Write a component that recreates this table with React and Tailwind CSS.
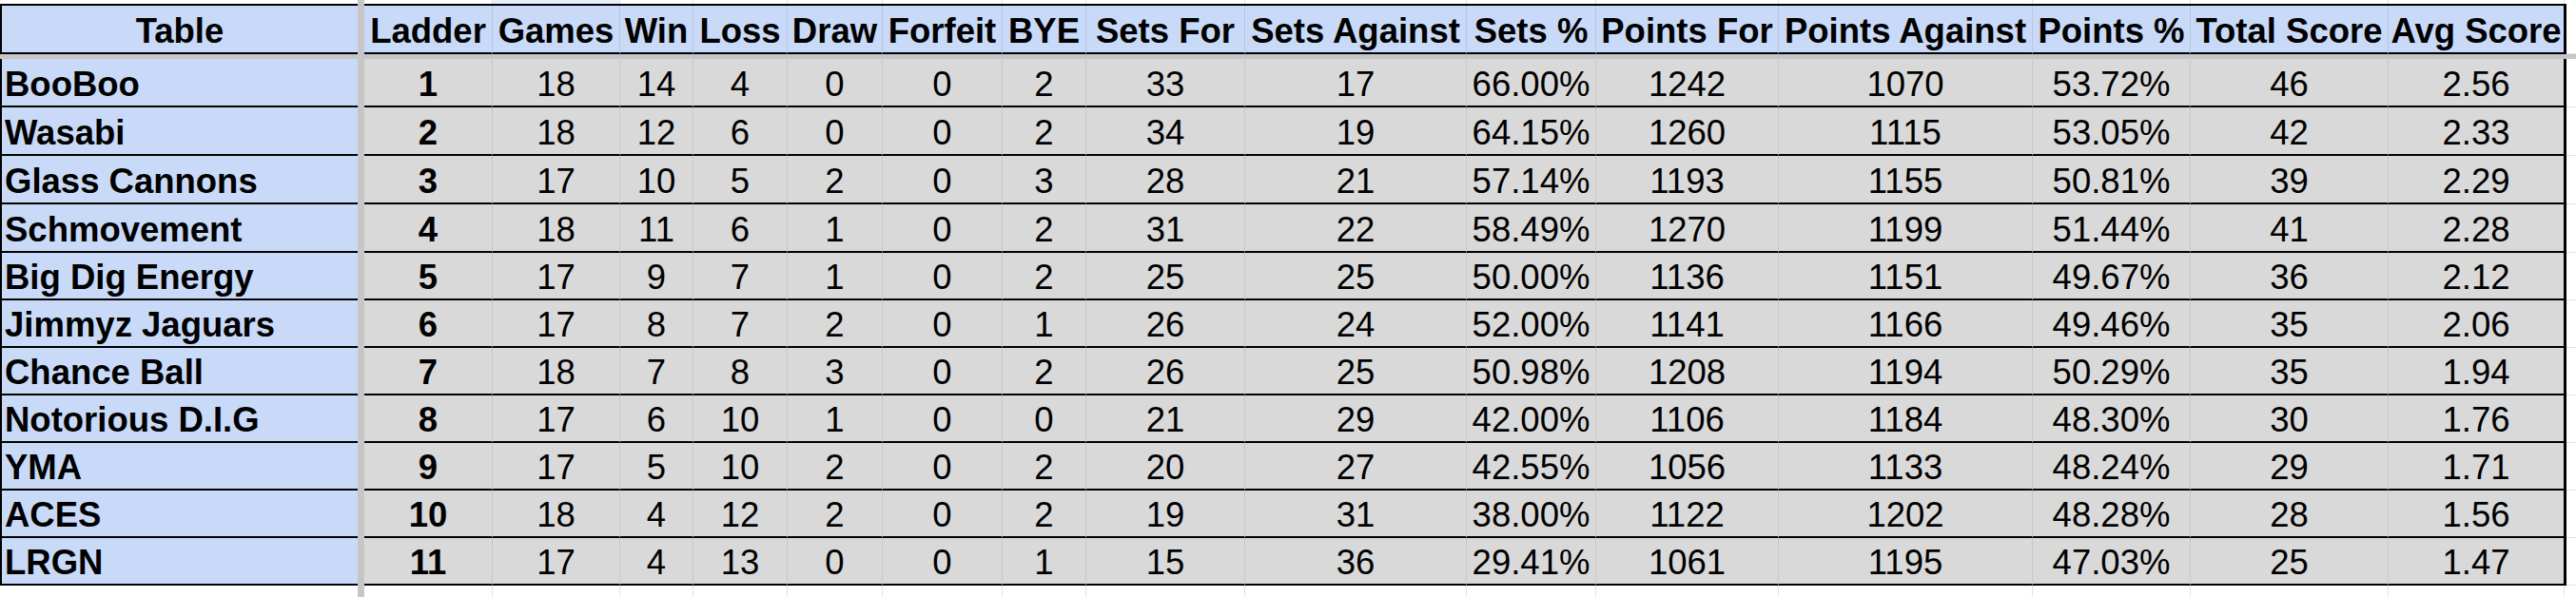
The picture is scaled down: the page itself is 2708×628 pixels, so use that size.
import React from 'react';

const columns = [
  { label: 'Ladder', w: 'w-[134px]' },
  { label: 'Games', w: 'w-[134px]' },
  { label: 'Win', w: 'w-[77px]' },
  { label: 'Loss', w: 'w-[99px]' },
  { label: 'Draw', w: 'w-[100px]' },
  { label: 'Forfeit', w: 'w-[126px]' },
  { label: 'BYE', w: 'w-[88px]' },
  { label: 'Sets For', w: 'w-[167px]' },
  { label: 'Sets Against', w: 'w-[233px]' },
  { label: 'Sets %', w: 'w-[136px]' },
  { label: 'Points For', w: 'w-[192px]' },
  { label: 'Points Against', w: 'w-[267px]' },
  { label: 'Points %', w: 'w-[166px]' },
  { label: 'Total Score', w: 'w-[208px]' },
  { label: 'Avg Score', w: 'w-[185px]' },
];

const teams = [
  ['BooBoo', 1, 18, 14, 4, 0, 0, 2, 33, 17, '66.00%', 1242, 1070, '53.72%', 46, '2.56'],
  ['Wasabi', 2, 18, 12, 6, 0, 0, 2, 34, 19, '64.15%', 1260, 1115, '53.05%', 42, '2.33'],
  ['Glass Cannons', 3, 17, 10, 5, 2, 0, 3, 28, 21, '57.14%', 1193, 1155, '50.81%', 39, '2.29'],
  ['Schmovement', 4, 18, 11, 6, 1, 0, 2, 31, 22, '58.49%', 1270, 1199, '51.44%', 41, '2.28'],
  ['Big Dig Energy', 5, 17, 9, 7, 1, 0, 2, 25, 25, '50.00%', 1136, 1151, '49.67%', 36, '2.12'],
  ['Jimmyz Jaguars', 6, 17, 8, 7, 2, 0, 1, 26, 24, '52.00%', 1141, 1166, '49.46%', 35, '2.06'],
  ['Chance Ball', 7, 18, 7, 8, 3, 0, 2, 26, 25, '50.98%', 1208, 1194, '50.29%', 35, '1.94'],
  ['Notorious D.I.G', 8, 17, 6, 10, 1, 0, 0, 21, 29, '42.00%', 1106, 1184, '48.30%', 30, '1.76'],
  ['YMA', 9, 17, 5, 10, 2, 0, 2, 20, 27, '42.55%', 1056, 1133, '48.24%', 29, '1.71'],
  ['ACES', 10, 18, 4, 12, 2, 0, 2, 19, 31, '38.00%', 1122, 1202, '48.28%', 28, '1.56'],
  ['LRGN', 11, 17, 4, 13, 0, 0, 1, 15, 36, '29.41%', 1061, 1195, '47.03%', 25, '1.47'],
];

// the sheet's rows are not all the same height
const rowHeights = ['h-[51px]', 'h-[51px]', 'h-[51px]', 'h-[51px]', 'h-[50px]', 'h-[50px]', 'h-[50px]', 'h-[50px]', 'h-[50px]', 'h-[50px]', 'h-[50px]'];

// thin strip of empty sheet above / below the table
const GridStrip = ({ h, tint }) => (
  <div className={`flex ${h}`}>
    <div className="w-[376px] bg-white" />
    <div className="w-[7px] bg-[#c6c6c6]" />
    {columns.map((c, i) => (
      <div
        key={c.label}
        className={`${c.w} ${i === 0 ? '' : 'border-l border-l-[#e2e3e3]'} ${tint && i === 1 ? 'bg-[#e8f0fe]' : 'bg-white'}`}
      />
    ))}
    <div className="w-[3px] border-l border-l-[#e2e3e3] bg-white" />
    <div className="flex-1 bg-white" />
  </div>
);

const Row = ({ cells, header, h }) => {
  const bg = header ? 'bg-[#c9daf8]' : 'bg-[#d9d9d9]';
  const sep = header ? 'border-l-[#b7c6df]' : 'border-l-[#c8c8c8]';
  return (
    <div className={`flex ${h}`}>
      <div
        className={`w-[376px] flex items-end pb-[4px] border-l-2 border-l-black border-b-2 border-b-black bg-[#c9daf8] font-bold whitespace-nowrap ${header ? 'justify-center' : 'pl-[3px]'}`}
      >
        {cells[0]}
      </div>
      <div className="w-[7px] bg-[#c6c6c6]" />
      {columns.map((c, i) => (
        <div
          key={c.label}
          className={`${c.w} flex items-end justify-center pb-[4px] border-b-2 border-b-black whitespace-nowrap ${bg} ${i === 0 ? 'font-bold' : `border-l ${sep}`} ${header ? 'font-bold' : ''}`}
        >
          {cells[i + 1]}
        </div>
      ))}
      <div className="w-[3px] bg-black" />
      <div className="flex-1 bg-white border-b border-b-[#e2e3e3]" />
    </div>
  );
};

export default function App() {
  return (
    <div className="w-[2708px] h-[628px] overflow-hidden bg-white text-black text-[36.5px] leading-none font-['Liberation_Sans',Arial,sans-serif]">
      <GridStrip h="h-[4px]" tint />
      <div className="flex h-[2px]">
        <div className="w-[376px] bg-black" />
        <div className="w-[7px] bg-[#c6c6c6]" />
        <div className="w-[2315px] bg-black" />
        <div className="flex-1 bg-white" />
      </div>
      <Row header h="h-[51px]" cells={['Table', ...columns.map((c) => c.label)]} />
      <div className="h-[5px] bg-[#c6c6c6]" />
      {teams.map((t, i) => (
        <Row key={t[0]} h={rowHeights[i]} cells={t} />
      ))}
      <GridStrip h="h-[20px]" />
    </div>
  );
}
